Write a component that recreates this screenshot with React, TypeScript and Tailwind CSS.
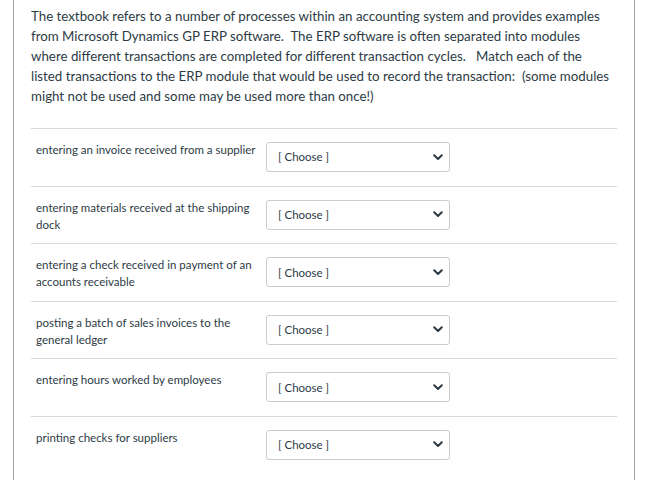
import React from "react";

const rows = [
  "entering an invoice received from a supplier",
  "entering materials received at the shipping dock",
  "entering a check received in payment of an accounts receivable",
  "posting a batch of sales invoices to the general ledger",
  "entering hours worked by employees",
  "printing checks for suppliers",
];

function Chevron() {
  return (
    <svg width="10" height="7" viewBox="0 0 10 7" className="shrink-0">
      <path d="M1.2 1.2 L5 5 L8.8 1.2" fill="none" stroke="#2d3b45" strokeWidth="2" strokeLinecap="round" strokeLinejoin="round" />
    </svg>
  );
}

export default function App() {
  return (
    <div className="w-[651px] h-[480px] overflow-hidden bg-white" style={{ fontFamily: "Lato, 'Noto Sans', sans-serif" }}>
      <div className="ml-[13px] w-[622px] min-h-[480px] border-x border-[#a5a5a5] px-[17px] pt-[6px]">
        <p className="text-[13.3px] leading-[20px] text-[#2d3b45] pr-[4px]">
          The textbook refers to a number of processes within an accounting system and provides examples from Microsoft Dynamics GP ERP software.&nbsp; The ERP software is often separated into modules where different transactions are completed for different transaction cycles.&nbsp;&nbsp; Match each of the listed transactions to the ERP module that would be used to record the transaction:&nbsp; (some modules might not be used and some may be used more than once!)
        </p>
        <div className="mt-[22px]">
          {rows.map((r) => (
            <div key={r} className="flex items-start border-t border-[#dadada] pt-[13px] h-[57.6px] overflow-visible">
              <div className="w-[226px] ml-[5px] mr-[4px] text-[11.5px] leading-[17px] text-[#2d3b45] -mt-[1px]">{r}</div>
              <div className="w-[184px] h-[30px] shrink-0 border border-[#c7cdd1] rounded-[3px] bg-white flex items-center justify-between pl-[11px] pr-[6px]">
                <span className="text-[11.5px] text-[#2d3b45]">[ Choose ]</span>
                <Chevron />
              </div>
            </div>
          ))}
        </div>
      </div>
    </div>
  );
}
